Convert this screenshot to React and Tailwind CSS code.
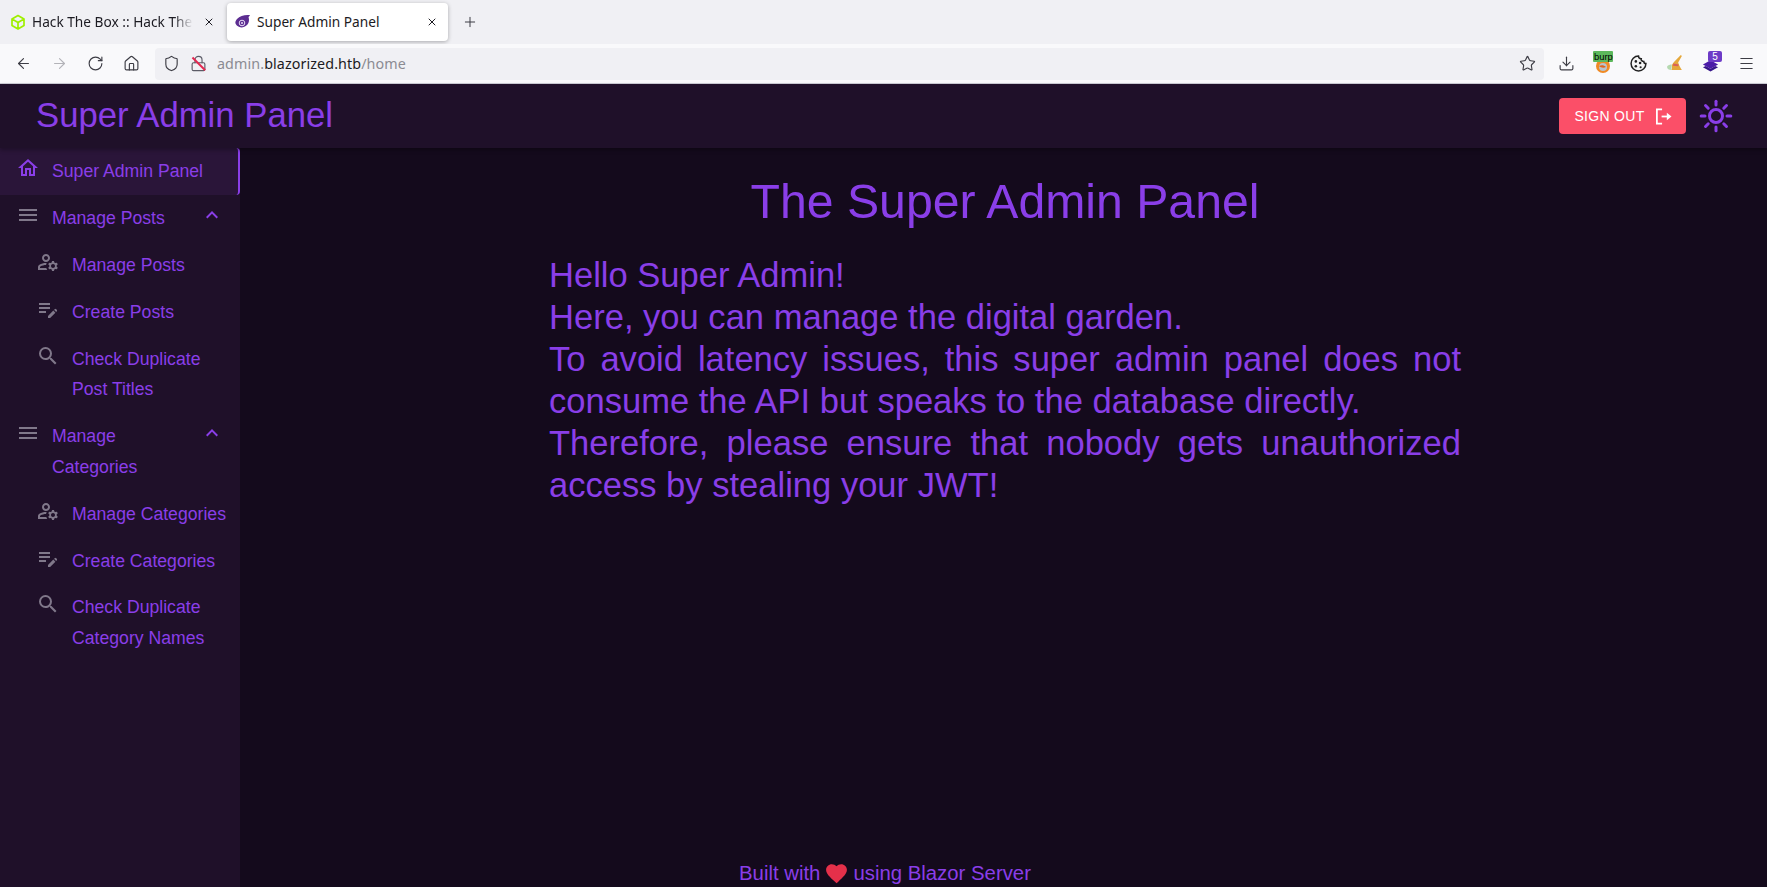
import React from "react";
import { MdOutlineManageAccounts, MdEditNote, MdSearch, MdOutlineHome, MdMenu, MdExpandLess } from "react-icons/md";
import { ArrowLeft, ArrowRight, RotateCw, Home, Shield, Lock, Star, Download, Menu, X, Plus } from "lucide-react";

const Item = ({ icon: I, children, sub, chevron, active }) => (
  <div className={`flex items-start py-2 pr-4 text-[17.65px] leading-[30.8px] text-[#8a3ee8] ${sub ? "pl-9" : "pl-4"} ${active ? "bg-[#2a1539] rounded-r-[4px] border-r-2 border-[#8a3ee8]" : ""}`}>
    <I className={`w-6 h-6 shrink-0 mr-[12px] ${active ? "text-[#8a3ee8]" : "text-[#80788a]"}`} />
    <span className={sub ? "mr-[-12px]" : "flex-1"}>{children}</span>
    {chevron && <MdExpandLess className="w-6 h-6 shrink-0 text-[#8a3ee8] ml-2" />}
  </div>
);

const Tb = ({ I, c = "text-[#3c3c44]" }) => <I className={`w-[17px] h-[17px] ${c}`} strokeWidth={1.6} />;

const rays = [0, 45, 90, 135, 180, 225, 270, 315];

export default function App() {
  return (
    <div className="h-[887px] w-[1767px] overflow-hidden flex flex-col font-['Liberation_Sans',sans-serif] bg-[#140a1c]">
      {/* Browser tabs */}
      <div className="h-[44px] shrink-0 bg-[#f0f0f4] flex items-center pl-[2px] font-['Noto_Sans',sans-serif] text-[13.7px] text-[#1c1b22]">
        <div className="w-[221px] flex items-center pl-[8px] pr-[8px] gap-[6px]">
          <svg viewBox="0 0 16 16" className="w-[16px] h-[16px] shrink-0" fill="none" stroke="#9fef00" strokeWidth="1.7" strokeLinejoin="round"><path d="M8 1.5 14 5v6.5L8 15l-6-3.5V5zM2 5l6 3.4L14 5M8 8.4V15" /></svg>
          <span className="flex-1 min-w-0 whitespace-nowrap overflow-hidden [mask-image:linear-gradient(to_right,black_88%,transparent)]">Hack The Box :: Hack The</span>
          <X className="w-[12px] h-[12px] shrink-0 ml-1" />
        </div>
        <div className="w-[221px] h-[38px] ml-[4px] bg-white rounded-[4px] shadow-[0_1px_4px_rgba(0,0,0,0.3)] flex items-center pl-[8px] pr-[10px] gap-[6px]">
          <svg viewBox="0 0 16 16" className="w-[16px] h-[16px] shrink-0"><path d="M2 5C5 1.5 10 .5 15 1c-.5 1-1 1.5-1.500 2 1 3 .5 6-1.500 8-3 3-7 3-9.500 1S-.500 8 2 5z" fill="#5c2d91" /><circle cx="7" cy="9" r="2.800" fill="none" stroke="#e6dcf5" strokeWidth="1" /><circle cx="7" cy="9" r="1" fill="#e6dcf5" /></svg>
          <span className="flex-1 whitespace-nowrap">Super Admin Panel</span>
          <X className="w-[12px] h-[12px] shrink-0" />
        </div>
        <Plus className="w-[16px] h-[16px] ml-[14px] text-[#3c3c44]" strokeWidth={1.5} />
      </div>
      {/* Toolbar */}
      <div className="h-[40px] shrink-0 bg-[#f9f9fb] border-b border-[#cfcfd8] flex items-center font-['Noto_Sans',sans-serif]">
        <div className="flex items-center gap-[19px] pl-[15px] w-[155px]">
          <Tb I={ArrowLeft} />
          <Tb I={ArrowRight} c="text-[#b3b3b8]" />
          <Tb I={RotateCw} />
          <Tb I={Home} />
        </div>
        <div className="w-[1389px] h-[32px] bg-[#f0f0f4] rounded-[4px] flex items-center pl-[8px] pr-[8px] text-[14.3px]">
          <Tb I={Shield} />
          <span className="relative ml-[10px] mr-[10px] flex"><Tb I={Lock} c="text-[#5b5b66]" /><span className="absolute left-0 top-[8px] w-[18px] h-[1.5px] rotate-45 bg-[#e22850]" /></span>
          <span className="flex-1 text-[#8b8b92] tracking-[0.1px]">admin.<span className="text-[#1c1b22]">blazorized.htb</span>/home</span>
          <Tb I={Star} />
        </div>
        <div className="flex-1 flex items-center pl-[14px] gap-[19px]">
          <Download className="w-[17px] h-[17px] text-[#3c3c44]" strokeWidth={1.6} />
          <span className="relative w-[17px] h-[17px] flex items-center justify-center">
            <svg viewBox="0 0 16 16" className="w-[16px] h-[16px] mt-[4px]"><circle cx="8" cy="8" r="7" fill="#f08a24" /><circle cx="8" cy="9" r="4" fill="#b9c3cc" /><path d="M4 8c2-1 5-1 7 1-2 1-5 1-7-1z" fill="#e0641c" /></svg>
            <span className="absolute -top-[4px] -left-[1px] w-[20px] h-[11px] overflow-hidden bg-[#5cb85c] text-[9.4px] leading-[11px] text-black rounded-[1px] font-['Liberation_Sans',sans-serif] pl-[1px]">burp</span>
          </span>
          <svg viewBox="0 0 16 16" className="w-[17px] h-[17px]"><path d="M8 1a7 7 0 1 0 7 7c-1 0-2-.500-2-2-1.500 0-3-1-2.500-2.500C9 3.500 8 2.500 8 1z" fill="#f6f6f6" stroke="#222" strokeWidth="1.400" /><circle cx="5.500" cy="6" r="1.200" fill="#222" /><circle cx="9.500" cy="7.500" r="1.200" fill="#222" /><circle cx="5.500" cy="10.500" r="1.200" fill="#222" /><circle cx="10" cy="11.500" r="1" fill="#222" /></svg>
          <svg viewBox="0 0 16 16" className="w-[17px] h-[17px] translate-x-[1px]"><path d="M7 6 13 0l1 1-3.500 6c1 3 2 5 3.500 7H4c1-1 .5-3 .5-4S6 7 7 6z" fill="#e5a83c" /><path d="M6 8l5 1-.5 1.500L5.500 10z" fill="#d9605a" /><path d="M0 11c1-1.500 3-2 4.500-2L4 14c-2 0-4-1-4-3z" fill="#b5d9b0" /></svg>
          <span className="relative w-[17px] h-[17px] flex items-center justify-center">
            <svg viewBox="0 0 18 16" className="w-[20px] h-[18px] mt-[3px]"><path d="M9 3 17 7.500 9 12 1 7.500z" fill="#4b1ca8" /><path d="M1 10.500 9 15 17 10.500 14 9 9 12 4 9z" fill="#36158a" /></svg>
            <span className="absolute -top-[4px] left-[6px] w-[14px] h-[11px] rounded-[2px] bg-[#6d3bc7] text-white text-[10px] leading-[11px] text-center font-['Liberation_Sans',sans-serif]">5</span>
          </span>
          <Menu className="w-[17px] h-[17px] text-[#3c3c44]" strokeWidth={1.5} />
        </div>
      </div>
      {/* App bar */}
      <div className="h-[64px] shrink-0 bg-[#1f1029] flex items-center pl-[36px] pr-[33px] shadow-[0_2px_4px_rgba(0,0,0,0.3)] relative z-10">
        <h1 className="flex-1 text-[34.7px] leading-none text-[#8a3ee8] -mt-[2px]">Super Admin Panel</h1>
        <button className="h-[36px] w-[127px] rounded-[4px] bg-[#fb4f68] text-white text-[14px] tracking-[0.3px] flex items-center justify-center gap-[10px] uppercase pl-[1px]">
          Sign Out
          <svg viewBox="0 0 18 18" className="w-[17px] h-[17px]" fill="none" stroke="currentColor" strokeWidth="1.900"><path d="M7.500 1.500H2v15h5.500" /><path d="M7 9h7" /><path d="M12.500 5 17.500 9l-5 4z" fill="currentColor" stroke="none" /></svg>
        </button>
        <svg viewBox="0 0 36 36" className="w-[36px] h-[36px] ml-[12px] text-[#8a3ee8]" fill="none" stroke="currentColor" strokeWidth="3" strokeLinecap="round">
          <circle cx="18" cy="18" r="6.500" />
          {rays.map((r) => <path key={r} d="M18 3.200v3.800" transform={`rotate(${r} 18 18)`} />)}
        </svg>
      </div>
      <div className="flex flex-1 min-h-0">
        <aside className="w-[240px] shrink-0 bg-[#1f1029] pt-[0.4px]">
          <Item icon={MdOutlineHome} active>Super Admin Panel</Item>
          <Item icon={MdMenu} chevron>Manage Posts</Item>
          <Item icon={MdOutlineManageAccounts} sub>Manage Posts</Item>
          <Item icon={MdEditNote} sub>Create Posts</Item>
          <Item icon={MdSearch} sub>Check Duplicate Post Titles</Item>
          <Item icon={MdMenu} chevron>Manage Categories</Item>
          <Item icon={MdOutlineManageAccounts} sub>Manage Categories</Item>
          <Item icon={MdEditNote} sub>Create Categories</Item>
          <Item icon={MdSearch} sub>Check Duplicate Category Names</Item>
        </aside>
        <main className="flex-1 flex flex-col text-[#8a3ee8] min-w-0">
          <h2 className="text-[48.2px] leading-[56px] text-center mt-[25px] ml-[3px]">The Super Admin Panel</h2>
          <div className="w-[912px] mt-[25px] ml-[309px] text-[34.56px] leading-[42px] text-justify">
            <div>Hello Super Admin!</div>
            <div>Here, you can manage the digital garden.</div>
            <div>To avoid latency issues, this super admin panel does not consume the API but speaks to the database directly.</div>
            <div>Therefore, please ensure that nobody gets unauthorized access by stealing your JWT!</div>
          </div>
          <div className="mt-auto mb-[1px] ml-[499px] text-[20.35px] leading-[26px] flex items-center">
            Built with
            <svg viewBox="0 0 24 24" className="w-[25px] h-[25px] mx-[4px] text-[#e5304a]" fill="currentColor"><path d="M12 21.35l-1.45-1.32C5.4 15.36 2 12.28 2 8.5 2 5.42 4.42 3 7.5 3c1.74 0 3.41.81 4.5 2.09C13.09 3.81 14.76 3 16.5 3 19.58 3 22 5.42 22 8.5c0 3.78-3.4 6.86-8.55 11.54L12 21.35z" /></svg>
            using Blazor Server
          </div>
        </main>
      </div>
    </div>
  );
}
